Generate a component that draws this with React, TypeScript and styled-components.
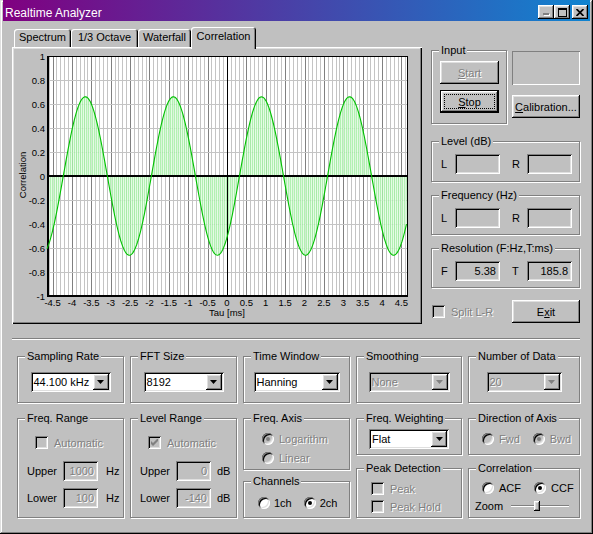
import React, { useMemo } from "react";
import styled, { createGlobalStyle, css } from "styled-components";

const FACE = "#c0c0c0";
const SHADOW = "#808080";
const LIGHT = "#dfdfdf";
const FONT = `"Liberation Sans", Arial, sans-serif`;

const GlobalStyle = createGlobalStyle`
  html, body { margin: 0; padding: 0; background: ${FACE}; }
  body { font-family: ${FONT}; font-size: 11px; color: #000; }
  * { box-sizing: border-box; }
`;

const raised = css`
  box-shadow: inset -1px -1px 0 #000, inset 1px 1px 0 #fff,
    inset -2px -2px 0 ${SHADOW}, inset 2px 2px 0 ${LIGHT};
`;
const sunken = css`
  box-shadow: inset 1px 1px 0 ${SHADOW}, inset -1px -1px 0 #fff,
    inset 2px 2px 0 #000, inset -2px -2px 0 ${LIGHT};
`;
const grayText = css`
  color: ${SHADOW};
  text-shadow: 1px 1px 0 #fff;
`;

const Window = styled.div`
  width: 593px;
  height: 534px;
  background: ${FACE};
  padding: 0 3px 3px;
  box-shadow: inset -1px -1px 0 #000, inset 1px 1px 0 ${LIGHT},
    inset -2px -2px 0 ${SHADOW}, inset 2px 2px 0 #fff;
  display: flex;
  flex-direction: column;
`;

const TitleBar = styled.div`
  height: 21px;
  flex: none;
  display: flex;
  justify-content: space-between;
  align-items: flex-start;
  padding: 0 2px;
  background: linear-gradient(90deg, #800080, #1084d0);
`;

const Title = styled.span`
  color: #fff;
  font-size: 12px;
  line-height: 12px;
  padding-top: 7px;
`;

const CapButtons = styled.div`
  display: flex;
  margin-top: 5px;
`;

const CapButton = styled.span<{ $ml?: number }>`
  width: 16px;
  height: 14px;
  margin-left: ${(p) => p.$ml ?? 0}px;
  background: ${FACE};
  ${raised};
  display: flex;
  align-items: center;
  justify-content: center;
  svg { display: block; }
`;

const Client = styled.div`
  padding: 6px 10px 0 9px;
`;

const TopArea = styled.div`
  display: flex;
  gap: 9px;
  height: 297px;
`;

const TabsColumn = styled.div`
  width: 410px;
  display: flex;
  flex-direction: column;
`;

const TabStrip = styled.div`
  height: 20px;
  display: flex;
  align-items: flex-end;
  padding-left: 2px;
`;

const Tab = styled.div<{ $w: number; $active?: boolean }>`
  width: ${(p) => p.$w}px;
  height: ${(p) => (p.$active ? 22 : 18)}px;
  margin-bottom: ${(p) => (p.$active ? -2 : 0)}px;
  position: relative;
  z-index: ${(p) => (p.$active ? 1 : 0)};
  background: ${FACE};
  border-radius: 3px 3px 0 0;
  box-shadow: inset 1px 1px 0 #fff, inset -1px 0 0 #000, inset -2px 0 0 ${SHADOW};
  display: flex;
  justify-content: center;
  padding-top: ${(p) => (p.$active ? 3 : 2)}px;
  line-height: 13px;
  white-space: nowrap;
`;

const TabPanel = styled.div`
  height: 277px;
  padding: 2px;
  background: ${FACE};
  box-shadow: inset 1px 1px 0 #fff, inset -1px -1px 0 #000,
    inset -2px -2px 0 ${SHADOW}, inset 2px 2px 0 ${LIGHT};
  svg { display: block; }
`;

const Side = styled.div`
  width: 149px;
  padding-top: 23px;
  display: flex;
  flex-direction: column;
`;

const InputRow = styled.div`
  display: flex;
  gap: 5px;
`;

const RightCol = styled.div`
  display: flex;
  flex-direction: column;
  gap: 10px;
  padding-top: 1px;
`;

const StaticBox = styled.div`
  width: 68px;
  height: 34px;
  box-shadow: inset 1px 1px 0 ${SHADOW}, inset -1px -1px 0 #fff;
`;

const Group = styled.div<{ $w?: number; $h: number; $mt?: number; $pad?: string }>`
  position: relative;
  width: ${(p) => (p.$w ? `${p.$w}px` : "auto")};
  height: ${(p) => p.$h}px;
  margin-top: ${(p) => p.$mt ?? 0}px;
  padding: ${(p) => p.$pad ?? "0"};
  border: 1px solid ${SHADOW};
  box-shadow: 1px 1px 0 #fff, inset 1px 1px 0 #fff;
`;

const Legend = styled.span`
  position: absolute;
  top: -7px;
  left: 7px;
  padding: 0 2px;
  line-height: 13px;
  background: ${FACE};
  white-space: nowrap;
`;

const Button = styled.button<{ $w: number; $default?: boolean; $disabled?: boolean }>`
  position: relative;
  width: ${(p) => p.$w}px;
  height: 23px;
  border: 0;
  padding: 0;
  background: ${FACE};
  font: 11px ${FONT};
  color: #000;
  ${raised};
  ${(p) => p.$disabled && grayText};
  ${(p) =>
    p.$default &&
    css`
      box-shadow: inset 0 0 0 1px #000, inset -2px -2px 0 #000, inset 2px 2px 0 #fff,
        inset -3px -3px 0 ${SHADOW}, inset 3px 3px 0 ${LIGHT};
      &::after {
        content: "";
        position: absolute;
        inset: 4px;
        border: 1px dotted #000;
      }
    `};
`;

const BtnStack = styled.div`
  display: flex;
  flex-direction: column;
  gap: 6px;
`;

const ValueRow = styled.div<{ $mt?: number }>`
  display: flex;
  align-items: center;
  margin-top: ${(p) => p.$mt ?? 0}px;
`;

const RowLabel = styled.span<{ $w: number; $ml?: number }>`
  width: ${(p) => p.$w}px;
  margin-left: ${(p) => p.$ml ?? 0}px;
  flex: none;
`;

const Field = styled.div<{ $w: number; $disabled?: boolean }>`
  width: ${(p) => p.$w}px;
  height: 20px;
  flex: none;
  background: ${FACE};
  ${sunken};
  padding: 0 4px;
  line-height: 20px;
  text-align: right;
  ${(p) => p.$disabled && grayText};
`;

const Unit = styled.span<{ $ml: number }>`
  margin-left: ${(p) => p.$ml}px;
`;

const BottomRow = styled.div`
  margin-top: 12px;
  height: 23px;
  display: flex;
  align-items: center;
  justify-content: space-between;
  padding-left: 1px;
`;

const Separator = styled.div`
  margin-top: 14px;
  height: 2px;
  border-top: 1px solid ${SHADOW};
  border-bottom: 1px solid #fff;
`;

const BottomGrid = styled.div`
  margin: 16px 0 0 5px;
  display: grid;
  grid-template-columns: 107px 107px 107px 106px 112px;
  column-gap: 6px;
`;

const Column = styled.div`
  display: flex;
  flex-direction: column;
`;

const Combo = styled.div<{ $w: number; $disabled?: boolean }>`
  width: ${(p) => p.$w}px;
  height: 20px;
  margin: 0 auto;
  padding: 2px;
  display: flex;
  align-items: center;
  background: ${(p) => (p.$disabled ? FACE : "#fff")};
  ${sunken};
`;

const ComboText = styled.span<{ $disabled?: boolean }>`
  flex: 1;
  padding-left: 1px;
  line-height: 16px;
  ${(p) => p.$disabled && grayText};
`;

const ComboArrow = styled.span`
  width: 16px;
  height: 16px;
  flex: none;
  background: ${FACE};
  ${raised};
  display: flex;
  align-items: center;
  justify-content: center;
  svg { display: block; }
`;

const Option = styled.label<{ $disabled?: boolean; $gap?: number }>`
  display: inline-flex;
  align-items: center;
  gap: ${(p) => p.$gap ?? 5}px;
  height: 13px;
  white-space: nowrap;
  span:last-child {
    ${(p) => p.$disabled && grayText};
  }
`;

const OptionRow = styled.div<{ $gap: number; $ml?: number }>`
  display: flex;
  gap: ${(p) => p.$gap}px;
  margin-left: ${(p) => p.$ml ?? 0}px;
`;

const OptionStack = styled.div<{ $gap: number; $ml?: number }>`
  display: flex;
  flex-direction: column;
  gap: ${(p) => p.$gap}px;
  margin-left: ${(p) => p.$ml ?? 0}px;
`;

const Box = styled.span<{ $disabled?: boolean }>`
  width: 13px;
  height: 13px;
  flex: none;
  background: ${(p) => (p.$disabled ? FACE : "#fff")};
  ${sunken};
  display: flex;
  align-items: center;
  justify-content: center;
  svg { display: block; }
`;

const Radio = styled.span<{ $checked?: boolean; $disabled?: boolean }>`
  position: relative;
  width: 12px;
  height: 12px;
  flex: none;
  border-radius: 50%;
  background: ${(p) => (p.$disabled ? FACE : "#fff")};
  box-shadow: inset 1px 1px 0 ${SHADOW}, inset -1px -1px 0 #fff,
    inset 2px 2px 0 #000, inset -2px -2px 0 ${LIGHT};
  &::after {
    content: "";
    display: ${(p) => (p.$checked ? "block" : "none")};
    position: absolute;
    left: 4px;
    top: 4px;
    width: 4px;
    height: 4px;
    border-radius: 50%;
    background: ${(p) => (p.$disabled ? SHADOW : "#000")};
  }
`;

const ZoomRow = styled.div`
  margin-top: 5px;
  display: flex;
  align-items: center;
  gap: 8px;
`;

const Slider = styled.div`
  position: relative;
  width: 58px;
  height: 14px;
  display: flex;
  align-items: center;
`;

const Track = styled.div`
  width: 100%;
  height: 2px;
  border-top: 1px solid ${SHADOW};
  border-bottom: 1px solid #fff;
`;

const Thumb = styled.div`
  position: absolute;
  left: 23px;
  top: 2px;
  width: 6px;
  height: 10px;
  background: ${FACE};
  ${raised};
`;

/* ---------- small drawings ---------- */

const Arrow = ({ disabled }: { disabled?: boolean }) => (
  <svg width="7" height="4" viewBox="0 0 7 4">
    <path d="M0 0h7L3.5 4z" fill={disabled ? SHADOW : "#000"} />
  </svg>
);

const Check = ({ disabled }: { disabled?: boolean }) => (
  <svg width="7" height="7" viewBox="0 0 7 7">
    <path d="M0 2v3l2 2 5-5V-1L2 4z" fill={disabled ? SHADOW : "#000"} />
  </svg>
);

const MinIcon = () => (
  <svg width="8" height="8" viewBox="0 0 8 8">
    <rect x="2" y="6" width="6" height="2" fill="#fff" />
    <rect x="1" y="5" width="6" height="2" fill={SHADOW} />
  </svg>
);

const MaxIcon = () => (
  <svg width="9" height="9" viewBox="0 0 9 9" shapeRendering="crispEdges">
    <rect x="0.5" y="0.5" width="8" height="8" fill="none" stroke="#000" />
    <rect x="0" y="1" width="9" height="1" fill="#000" />
  </svg>
);

const CloseIcon = () => (
  <svg width="8" height="7" viewBox="0 0 8 7">
    <path d="M0.5 0l7 7M7.5 0l-7 7" stroke="#000" strokeWidth="1.7" />
  </svg>
);

/* ---------- chart ---------- */

const CW = 406;
const CH = 273;
const PL = 33;
const PR = 393;
const PT = 7;
const PB = 247;
const Y0 = 127;
const TMAX = 4.644;
const PXMS = (PR - PL) / (2 * TMAX);
const xOf = (t: number) => (PL + PR) / 2 + t * PXMS;
const yOf = (v: number) => Y0 - v * 120;
const fmt = (n: number) => {
  const r = Math.round(n * 10) / 10;
  return r === 0 ? "0" : String(r);
};

const Chart = () => {
  const { curve, fill } = useMemo(() => {
    const pts: string[] = [];
    const dt = 1 / 44.1;
    for (let t = -TMAX; t <= TMAX + 1e-9; t += dt) {
      const v = 0.66 * Math.cos(2 * Math.PI * 0.44 * (t - 0.89));
      pts.push(`${xOf(t).toFixed(2)},${yOf(v).toFixed(2)}`);
    }
    const c = pts.join(" ");
    return { curve: c, fill: `${PL},${Y0} ${c} ${PR},${Y0}` };
  }, []);

  const vLines = [];
  for (let k = -46; k <= 46; k++) {
    if (k === 0) continue;
    const x = Math.round(xOf(k / 10)) + 0.5;
    if (x <= PL + 1 || x >= PR) continue;
    vLines.push(
      <line key={k} x1={x} x2={x} y1={PT} y2={PB} stroke={k % 5 === 0 ? "#808080" : "#c4c4c4"} />
    );
  }
  const hVals = [-0.8, -0.6, -0.4, -0.2, 0.2, 0.4, 0.6, 0.8];
  const yTicks = [1, 0.8, 0.6, 0.4, 0.2, 0, -0.2, -0.4, -0.6, -0.8, -1];
  const xTicks: number[] = [];
  for (let k = -9; k <= 9; k++) xTicks.push(k / 2);

  return (
    <svg width={CW} height={CH} fontFamily={FONT} fontSize="9.5">
      <defs>
        <pattern id="stripes" width="2" height="4" patternUnits="userSpaceOnUse">
          <rect width="1" height="4" fill="#a4eea4" />
          <rect x="1" width="1" height="4" fill="#e0fbe0" />
        </pattern>
      </defs>
      <rect x={PL} y={PT} width={PR - PL} height={PB - PT} fill="#fff" />
      <g shapeRendering="crispEdges">
        {vLines}
        {hVals.map((v) => (
          <line key={v} x1={PL} x2={PR} y1={yOf(v) + 0.5} y2={yOf(v) + 0.5} stroke="#c4c4c4" />
        ))}
      </g>
      <polygon points={fill} fill="url(#stripes)" opacity="0.85" />
      <g shapeRendering="crispEdges">
        <rect x={Math.round(xOf(0))} y={PT} width="1" height={PB - PT} fill="#000" />
        <rect x={PL} y={Y0 - 1} width={PR - PL} height="2" fill="#000" />
        <rect x={PL + 0.5} y={PT + 0.5} width={PR - PL} height={PB - PT} fill="none" stroke="#000" />
        <rect x={PL} y={PT} width="2" height={PB - PT + 1} fill="#000" />
        <rect x={PL} y={PB - 1} width={PR - PL + 1} height="2" fill="#000" />
      </g>
      <polyline points={curve} fill="none" stroke="#00c000" strokeWidth="1.1" />
      {yTicks.map((v) => (
        <text key={v} x={31} y={yOf(v) + 3.5} textAnchor="end">
          {fmt(v)}
        </text>
      ))}
      {xTicks.map((t) => (
        <text key={t} x={xOf(t)} y={257} textAnchor="middle">
          {fmt(t)}
        </text>
      ))}
      <text x={(PL + PR) / 2} y={267} textAnchor="middle">
        Tau [ms]
      </text>
      <text x={12} y={126} textAnchor="middle" transform="rotate(-90 12 126)">
        Correlation
      </text>
    </svg>
  );
};

/* ---------- pieces ---------- */

const ComboBox = ({ w, value, disabled }: { w: number; value: string; disabled?: boolean }) => (
  <Combo $w={w} $disabled={disabled}>
    <ComboText $disabled={disabled}>{value}</ComboText>
    <ComboArrow>
      <Arrow disabled={disabled} />
    </ComboArrow>
  </Combo>
);

const RadioOpt = ({
  label,
  checked,
  disabled,
  gap,
}: {
  label: string;
  checked?: boolean;
  disabled?: boolean;
  gap?: number;
}) => (
  <Option $disabled={disabled} $gap={gap}>
    <Radio $checked={checked} $disabled={disabled} />
    <span>{label}</span>
  </Option>
);

const CheckOpt = ({ label, checked, disabled }: { label: string; checked?: boolean; disabled?: boolean }) => (
  <Option $disabled={disabled} $gap={6}>
    <Box $disabled={disabled}>{checked && <Check disabled={disabled} />}</Box>
    <span>{label}</span>
  </Option>
);

const RangeGroup = ({
  title,
  checked,
  upper,
  lower,
  unit,
  unitGap,
}: {
  title: string;
  checked?: boolean;
  upper: string;
  lower: string;
  unit: string;
  unitGap: number;
}) => (
  <Group $h={100} $mt={15} $pad="17px 0 0 9px">
    <Legend>{title}</Legend>
    <OptionStack $gap={0} $ml={8}>
      <CheckOpt label="Automatic" checked={checked} disabled />
    </OptionStack>
    <ValueRow $mt={12}>
      <RowLabel $w={36}>Upper</RowLabel>
      <Field $w={35} $disabled>
        {upper}
      </Field>
      <Unit $ml={unitGap}>{unit}</Unit>
    </ValueRow>
    <ValueRow $mt={7}>
      <RowLabel $w={36}>Lower</RowLabel>
      <Field $w={35} $disabled>
        {lower}
      </Field>
      <Unit $ml={unitGap}>{unit}</Unit>
    </ValueRow>
  </Group>
);

const PairGroup = ({
  title,
  names,
  l,
  r,
  mt,
  h,
}: {
  title: string;
  names: [string, string];
  l?: string;
  r?: string;
  mt: number;
  h: number;
}) => (
  <Group $h={h} $mt={mt} $pad="12px 0 0 9px">
    <Legend>{title}</Legend>
    <ValueRow>
      <RowLabel $w={14}>{names[0]}</RowLabel>
      <Field $w={45}>{l}</Field>
      <RowLabel $w={15} $ml={12}>
        {names[1]}
      </RowLabel>
      <Field $w={45}>{r}</Field>
    </ValueRow>
  </Group>
);

const tabs = [
  { label: "Spectrum", w: 57 },
  { label: "1/3 Octave", w: 67 },
  { label: "Waterfall", w: 53 },
  { label: "Correlation", w: 65, active: true },
];

export default function App() {
  return (
    <>
      <GlobalStyle />
      <Window>
        <TitleBar>
          <Title>Realtime Analyzer</Title>
          <CapButtons>
            <CapButton>
              <MinIcon />
            </CapButton>
            <CapButton>
              <MaxIcon />
            </CapButton>
            <CapButton $ml={2}>
              <CloseIcon />
            </CapButton>
          </CapButtons>
        </TitleBar>

        <Client>
          <TopArea>
            <TabsColumn>
              <TabStrip>
                {tabs.map((t) => (
                  <Tab key={t.label} $w={t.w} $active={t.active}>
                    {t.label}
                  </Tab>
                ))}
              </TabStrip>
              <TabPanel>
                <Chart />
              </TabPanel>
            </TabsColumn>

            <Side>
              <InputRow>
                <Group $w={76} $h={74} $pad="10px 0 0 8px">
                  <Legend>Input</Legend>
                  <BtnStack>
                    <Button $w={59} $disabled>
                      <u>S</u>tart
                    </Button>
                    <Button $w={59} $default>
                      <u>S</u>top
                    </Button>
                  </BtnStack>
                </Group>
                <RightCol>
                  <StaticBox />
                  <Button $w={68}>
                    <u>C</u>alibration...
                  </Button>
                </RightCol>
              </InputRow>
              <PairGroup title="Level (dB)" names={["L", "R"]} mt={17} h={41} />
              <PairGroup title="Frequency (Hz)" names={["L", "R"]} mt={13} h={40} />
              <PairGroup title="Resolution (F:Hz,T:ms)" names={["F", "T"]} l="5.38" r="185.8" mt={13} h={40} />
              <BottomRow>
                <CheckOpt label="Split L-R" disabled />
                <Button $w={68}>
                  E<u>x</u>it
                </Button>
              </BottomRow>
            </Side>
          </TopArea>

          <Separator />

          <BottomGrid>
            <Column>
              <Group $h={47} $pad="15px 0 0">
                <Legend>Sampling Rate</Legend>
                <ComboBox w={80} value="44.100 kHz" />
              </Group>
              <RangeGroup title="Freq. Range" upper="1000" lower="100" unit="Hz" unitGap={8} />
            </Column>

            <Column>
              <Group $h={47} $pad="15px 0 0">
                <Legend>FFT Size</Legend>
                <ComboBox w={80} value="8192" />
              </Group>
              <RangeGroup title="Level Range" checked upper="0" lower="-140" unit="dB" unitGap={6} />
            </Column>

            <Column>
              <Group $h={47} $pad="15px 0 0">
                <Legend>Time Window</Legend>
                <ComboBox w={86} value="Hanning" />
              </Group>
              <Group $h={52} $mt={15} $pad="13px 0 0 18px">
                <Legend>Freq. Axis</Legend>
                <OptionStack $gap={6}>
                  <RadioOpt label="Logarithm" checked disabled />
                  <RadioOpt label="Linear" disabled />
                </OptionStack>
              </Group>
              <Group $h={37} $mt={11} $pad="14px 0 0 14px">
                <Legend>Channels</Legend>
                <OptionRow $gap={12}>
                  <RadioOpt label="1ch" gap={4} />
                  <RadioOpt label="2ch" checked gap={4} />
                </OptionRow>
              </Group>
            </Column>

            <Column>
              <Group $h={47} $pad="15px 0 0">
                <Legend>Smoothing</Legend>
                <ComboBox w={81} value="None" disabled />
              </Group>
              <Group $h={37} $mt={15} $pad="10px 0 0">
                <Legend>Freq. Weighting</Legend>
                <ComboBox w={80} value="Flat" />
              </Group>
              <Group $h={50} $mt={13} $pad="13px 0 0 14px">
                <Legend>Peak Detection</Legend>
                <OptionStack $gap={5}>
                  <CheckOpt label="Peak" disabled />
                  <CheckOpt label="Peak Hold" disabled />
                </OptionStack>
              </Group>
            </Column>

            <Column>
              <Group $h={47} $pad="15px 0 0">
                <Legend>Number of Data</Legend>
                <ComboBox w={75} value="20" disabled />
              </Group>
              <Group $h={37} $mt={15} $pad="13px 0 0 13px">
                <Legend>Direction of Axis</Legend>
                <OptionRow $gap={13}>
                  <RadioOpt label="Fwd" disabled />
                  <RadioOpt label="Bwd" checked disabled />
                </OptionRow>
              </Group>
              <Group $h={50} $mt={13} $pad="12px 0 0 6px">
                <Legend>Correlation</Legend>
                <OptionRow $gap={13} $ml={7}>
                  <RadioOpt label="ACF" />
                  <RadioOpt label="CCF" checked />
                </OptionRow>
                <ZoomRow>
                  <span>Zoom</span>
                  <Slider>
                    <Track />
                    <Thumb />
                  </Slider>
                </ZoomRow>
              </Group>
            </Column>
          </BottomGrid>
        </Client>
      </Window>
    </>
  );
}
